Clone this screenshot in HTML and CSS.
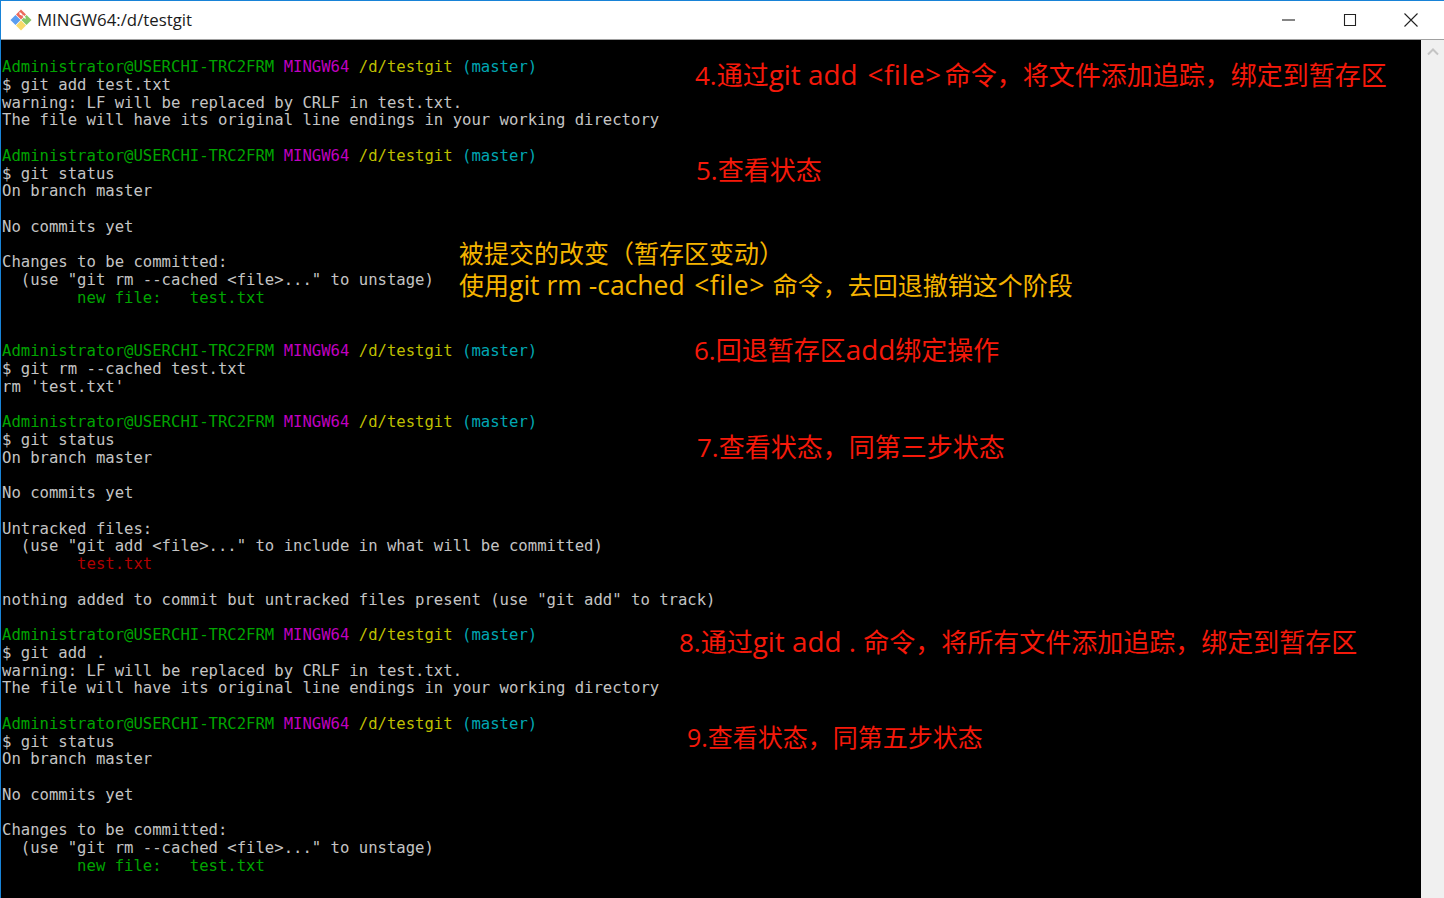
FILE: index.html
```html
<!DOCTYPE html>
<html lang="zh-CN">
<head>
<meta charset="utf-8">
<title>MINGW64:/d/testgit</title>
<link rel="stylesheet" href="styles.css">
</head>
<body>
<div class="window">
  <header class="titlebar">
    <svg class="app-icon" viewBox="0 0 22 22" width="22" height="22" aria-hidden="true">
      <path class="ic-blue" d="M5.500 6 10.500 11l-5 5-5-5z"/>
      <path class="ic-red" d="M11 .5 16 5.500l-5 5-5-5z"/>
      <path class="ic-green" d="M16.500 6 21.500 11l-5 5-5-5z"/>
      <path class="ic-yellow" d="M11 11.500 16 16.500l-5 5-5-5z"/>
      <path class="ic-cut" d="M9.500 3.500 12.500 6.500M13 6.500 15.500 9.500"/>
      <circle class="ic-dot" cx="10.500" cy="5" r="1"/>
    </svg>
    <span class="title">MINGW64:/d/testgit</span>
    <div class="controls">
      <button class="ctl"><svg viewBox="0 0 14 14" width="14" height="14"><path d="M0 7h13"/></svg></button>
      <button class="ctl"><svg viewBox="0 0 14 14" width="14" height="14"><path d="M1.500 1.500h11v11h-11z"/></svg></button>
      <button class="ctl"><svg viewBox="0 0 14 14" width="14" height="14"><path d="M.5.5l13 13M13.500.5l-13 13"/></svg></button>
    </div>
  </header>
  <div class="body">
    <main class="terminal">
<pre class="term"><span class="g">Administrator@USERCHI-TRC2FRM</span> <span class="m">MINGW64</span> <span class="y">/d/testgit</span> <span class="c">(master)</span>
$ git add test.txt
warning: LF will be replaced by CRLF in test.txt.
The file will have its original line endings in your working directory

<span class="g">Administrator@USERCHI-TRC2FRM</span> <span class="m">MINGW64</span> <span class="y">/d/testgit</span> <span class="c">(master)</span>
$ git status
On branch master

No commits yet

Changes to be committed:
  (use "git rm --cached &lt;file&gt;..." to unstage)
        <span class="g">new file:   test.txt</span>


<span class="g">Administrator@USERCHI-TRC2FRM</span> <span class="m">MINGW64</span> <span class="y">/d/testgit</span> <span class="c">(master)</span>
$ git rm --cached test.txt
rm 'test.txt'

<span class="g">Administrator@USERCHI-TRC2FRM</span> <span class="m">MINGW64</span> <span class="y">/d/testgit</span> <span class="c">(master)</span>
$ git status
On branch master

No commits yet

Untracked files:
  (use "git add &lt;file&gt;..." to include in what will be committed)
        <span class="r">test.txt</span>

nothing added to commit but untracked files present (use "git add" to track)

<span class="g">Administrator@USERCHI-TRC2FRM</span> <span class="m">MINGW64</span> <span class="y">/d/testgit</span> <span class="c">(master)</span>
$ git add .
warning: LF will be replaced by CRLF in test.txt.
The file will have its original line endings in your working directory

<span class="g">Administrator@USERCHI-TRC2FRM</span> <span class="m">MINGW64</span> <span class="y">/d/testgit</span> <span class="c">(master)</span>
$ git status
On branch master

No commits yet

Changes to be committed:
  (use "git rm --cached &lt;file&gt;..." to unstage)
        <span class="g">new file:   test.txt</span></pre>
      <p class="note red n4">4.通过<span class="lat">git add <span class="ang">&lt;file&gt;</span></span>命令，将文件添加追踪，绑定到暂存区</p>
      <p class="note red n5">5.查看状态</p>
      <p class="note amber na">被提交的改变（暂存区变动）<br>使用<span class="lat">git rm -cached <span class="ang">&lt;file&gt;</span> </span>命令，去回退撤销这个阶段</p>
      <p class="note red n6">6.回退暂存区<span class="lat">add</span>绑定操作</p>
      <p class="note red n7">7.查看状态，同第三步状态</p>
      <p class="note red n8">8.通过<span class="lat">git add . </span>命令，将所有文件添加追踪，绑定到暂存区</p>
      <p class="note red n9">9.查看状态，同第五步状态</p>
    </main>
    <aside class="scrollbar">
      <svg viewBox="0 0 12 8" width="12" height="8"><path d="M1 6.500 6 1.500l5 5"/></svg>
    </aside>
  </div>
</div>
</body>
</html>
```
FILE: styles.css
```css
* { box-sizing: border-box; }
html, body { margin: 0; height: 100%; overflow: hidden; background: #000; }
.window {
  height: 898px;
  display: flex;
  flex-direction: column;
  background: #fff;
  border-top: 1px solid #1883d7;
  border-left: 1px solid #1883d7;
}
.titlebar {
  height: 39px;
  flex: none;
  display: flex;
  align-items: center;
  background: #fff;
  border-bottom: 1px solid #a0a0a0;
}
.app-icon { margin-left: 9px; flex: none; margin-top: -1px; }
.ic-blue { fill: #5b9df0; }
.ic-red { fill: #ec6a5c; }
.ic-yellow { fill: #f8da6a; }
.ic-green { fill: #86c765; }
.ic-cut { fill: none; stroke: #fff; stroke-width: 1.200; }
.ic-dot { fill: #fff; }
.title {
  margin-left: 5px;
  font: 16.800px/20px "Open Sans", "Noto Sans", sans-serif;
  color: #1a1a1a;
}
.controls { margin-left: auto; display: flex; height: 100%; margin-right: 3px; }
.ctl {
  width: 61px;
  padding: 0;
  border: 0;
  background: none;
  display: flex;
  align-items: center;
  justify-content: center;
}
.ctl svg { fill: none; stroke: #222; stroke-width: 1.100; }
.body { flex: 1; display: flex; min-height: 0; }
.terminal { flex: 1; position: relative; background: #000; overflow: hidden; }
.term {
  margin: 0;
  padding: 19px 0 0 1px;
  font: 15.600px/17.750px "DejaVu Sans Mono", monospace;
  color: #c4c4c4;
}
.g { color: #00a400; }
.m { color: #bf00bf; }
.y { color: #bfbf00; }
.c { color: #00a6b2; }
.r { color: #b00000; }
.note {
  position: absolute;
  margin: 0;
  white-space: nowrap;
  font-family: "Open Sans", "Noto Sans CJK SC", sans-serif;
  font-size: 26px;
  line-height: 32px;
}
.lat { font-size: 1.070em; line-height: 1; }
.ang { letter-spacing: .020em; margin-left: .100em; margin-right: .040em; }
.n4 .ang { margin-right: .110em; }
.na .lat { font-size: 1.060em; }
.red { color: #f5190a; }
.amber { color: #f5b400; }
.n4 { left: 694px; top: 19px; }
.n5 { left: 695px; top: 114px; }
.na { left: 458px; top: 197px; font-size: 25px; }
.n6 { left: 693px; top: 294px; }
.n7 { left: 696px; top: 391px; }
.n8 { left: 678px; top: 586px; }
.n9 { left: 686px; top: 681px; font-size: 25px; }
.scrollbar {
  width: 23px;
  flex: none;
  background: #f0f0f0;
  display: flex;
  justify-content: center;
  padding-top: 8px;
}
.scrollbar svg { fill: none; stroke: #c4c4c4; stroke-width: 2; }
```
